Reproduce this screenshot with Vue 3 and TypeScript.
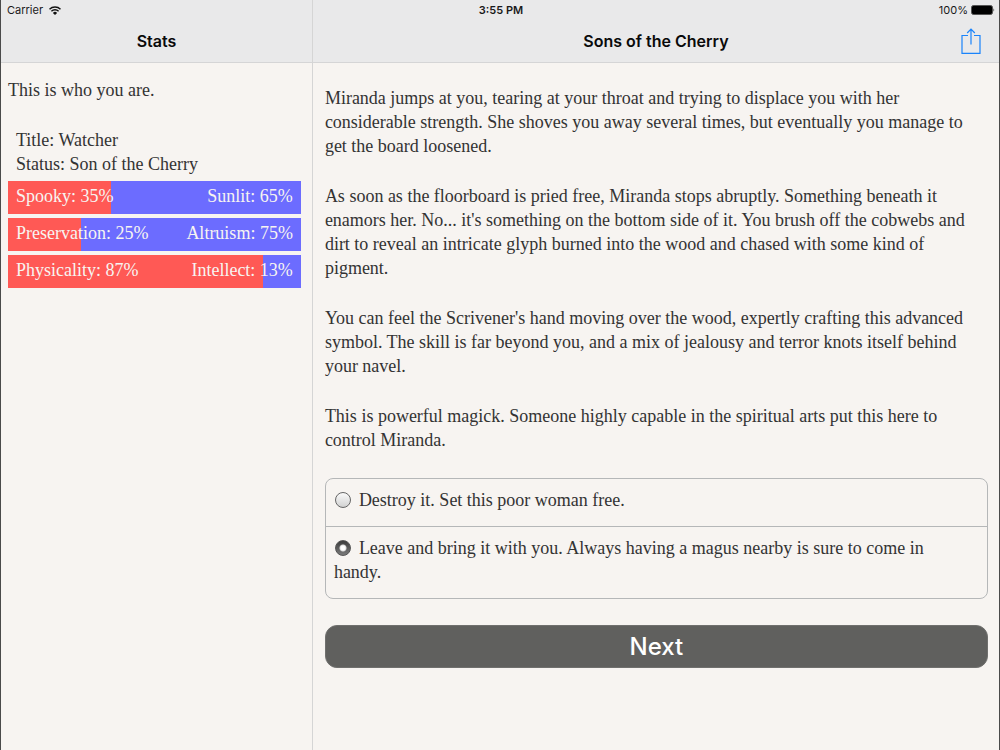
<script setup lang="ts">
import { ref } from 'vue'

interface OpposedStat {
  left: string
  right: string
  value: number
}

const stats: OpposedStat[] = [
  { left: 'Spooky', right: 'Sunlit', value: 35 },
  { left: 'Preservation', right: 'Altruism', value: 25 },
  { left: 'Physicality', right: 'Intellect', value: 87 },
]

const paragraphs: string[] = [
  'Miranda jumps at you, tearing at your throat and trying to displace you with her considerable strength. She shoves you away several times, but eventually you manage to get the board loosened.',
  "As soon as the floorboard is pried free, Miranda stops abruptly. Something beneath it enamors her. No... it's something on the bottom side of it. You brush off the cobwebs and dirt to reveal an intricate glyph burned into the wood and chased with some kind of pigment.",
  "You can feel the Scrivener's hand moving over the wood, expertly crafting this advanced symbol. The skill is far beyond you, and a mix of jealousy and terror knots itself behind your navel.",
  'This is powerful magick. Someone highly capable in the spiritual arts put this here to control Miranda.',
]

const choices: string[] = [
  'Destroy it. Set this poor woman free.',
  'Leave and bring it with you. Always having a magus nearby is sure to come in handy.',
]

const selected = ref(1)
</script>

<template>
  <div class="screen">
    <div class="status-bar">
      <div class="carrier">
        <span>Carrier</span>
        <svg class="wifi" viewBox="0 0 12 9" aria-hidden="true">
          <path d="M0.5 3.2a7.8 7.8 0 0 1 11 0M2.4 5.2a5.1 5.1 0 0 1 7.2 0" fill="none" stroke="#111" stroke-width="1.4" />
          <path d="M6 9L3.9 6.9a3 3 0 0 1 4.2 0z" fill="#111" />
        </svg>
      </div>
      <div class="time">3:55 PM</div>
      <div class="power">
        <span>100%</span>
        <svg class="battery" viewBox="0 0 24 10" aria-hidden="true">
          <rect x="0.5" y="0.5" width="21" height="9" rx="2" fill="#000" stroke="#555" />
          <path d="M22.5 3.2q1.5 1.8 0 3.6z" fill="#222" />
        </svg>
      </div>
    </div>

    <aside class="pane stats-pane">
      <header class="nav"><h1>Stats</h1></header>
      <div class="stats-body">
        <p class="intro">This is who you are.</p>
        <div class="facts">
          <div>Title: Watcher</div>
          <div>Status: Son of the Cherry</div>
        </div>
        <div class="bars">
          <div v-for="s in stats" :key="s.left" class="stat">
            <div class="fill" :style="{ width: s.value + '%' }"></div>
            <span>{{ s.left }}: {{ s.value }}%</span>
            <span>{{ s.right }}: {{ 100 - s.value }}%</span>
          </div>
        </div>
      </div>
    </aside>

    <main class="pane story-pane">
      <header class="nav">
        <h1>Sons of the Cherry</h1>
        <button class="share" type="button" aria-label="Share">
          <svg viewBox="0 0 20 26" aria-hidden="true">
            <path d="M7 7.5H1v17.9h18V7.5h-6M10 16.5V1.2M6.2 5L10 1.2L13.8 5" fill="none" stroke="#1a84fb" stroke-width="1.2" />
          </svg>
        </button>
      </header>
      <form class="story-body" @submit.prevent>
        <p v-for="(p, i) in paragraphs" :key="i">{{ p }}</p>
        <div class="choices" role="radiogroup" aria-label="Choices">
          <label v-for="(c, i) in choices" :key="i" class="choice">
            <input v-model="selected" type="radio" name="choice" :value="i" />{{ c }}
          </label>
        </div>
        <button class="next" type="submit">Next</button>
      </form>
    </main>
  </div>
</template>

<style>
body {
  margin: 0;
  background: #f7f4f1;
}
</style>

<style scoped>
.screen {
  box-sizing: border-box;
  min-height: 100vh;
  display: grid;
  grid-template-columns: 5fr 11fr;
  grid-template-rows: 20px 1fr;
  border-left: 1px solid #4a4a4a;
  border-right: 1px solid #4a4a4a;
  background: #f7f4f1;
  color: #333;
  font-family: "Liberation Serif", serif;
  font-size: 18px;
  line-height: 24px;
}

.status-bar {
  grid-column: 1 / -1;
  grid-row: 1;
  z-index: 1;
  display: grid;
  grid-template-columns: 1fr auto 1fr;
  align-items: center;
  padding: 0 4px 0 6px;
  color: #1a1a1a;
  font-family: Inter, sans-serif;
  font-size: 11px;
  line-height: 20px;
}

.carrier,
.power {
  display: flex;
  align-items: center;
  gap: 6px;
}

.power {
  justify-content: flex-end;
  gap: 3px;
}

.wifi {
  width: 12px;
  height: 9px;
}

.battery {
  width: 24px;
  height: 10px;
}

.time {
  font-weight: 600;
}

.pane {
  min-width: 0;
  grid-row: 1 / 3;
}

.stats-pane {
  grid-column: 1;
  border-right: 1px solid #d5d5d5;
}

.story-pane {
  grid-column: 2;
}

.nav {
  box-sizing: border-box;
  height: 63px;
  display: grid;
  grid-template-columns: 1fr auto 1fr;
  align-items: center;
  padding: 20px 18px 0;
  background: #e9e9ea;
  border-bottom: 1px solid #d5d5d6;
}

.nav h1 {
  grid-column: 2;
  margin: 0;
  color: #0a0a0a;
  font-family: Inter, sans-serif;
  font-size: 16px;
  font-weight: 600;
}

.share {
  justify-self: end;
  display: flex;
  padding: 0;
  border: 0;
  background: none;
}

.share svg {
  width: 20px;
  height: 26px;
}

.stats-body {
  padding: 15px 11px 24px 7px;
}

.intro {
  margin: 0 0 26px;
}

.facts {
  padding-left: 8px;
}

.bars {
  display: grid;
  gap: 4px;
  margin-top: 5px;
}

.stat {
  position: relative;
  display: flex;
  justify-content: space-between;
  padding: 3px 8px 6px;
  background: #6c6cff;
  color: #f7f4f1;
}

.fill {
  position: absolute;
  inset: 0 auto 0 0;
  background: #ff5955;
}

.stat span {
  position: relative;
}

.story-body {
  padding: 23px 11px 24px 12px;
}

.story-body p {
  margin: 0 0 26px;
}

.choices {
  border: 1px solid #b5b7b8;
  border-radius: 8px;
}

.choice {
  display: block;
  padding: 9px 24px 14px 8px;
}

.choice + .choice {
  border-top: 1px solid #b5b7b8;
}

.choice input {
  appearance: none;
  box-sizing: border-box;
  width: 16px;
  height: 16px;
  margin: 0 8px 0 1px;
  border: 1px solid #666;
  border-radius: 50%;
  background: linear-gradient(#fafafa, #d2d2d2);
  vertical-align: -2px;
}

.choice input:checked {
  border-color: #555;
  background:
    radial-gradient(circle, #fff 0 2px, #ddd 3px, transparent 4px),
    linear-gradient(#3c3c3c, #7a7a7a);
}

.next {
  width: 100%;
  height: 43px;
  margin-top: 26px;
  padding: 0;
  border: 1px solid #70706e;
  border-radius: 12px;
  background: #60605e;
  color: #fff;
  font-family: Inter, sans-serif;
  font-size: 24px;
  font-weight: 500;
}
</style>
